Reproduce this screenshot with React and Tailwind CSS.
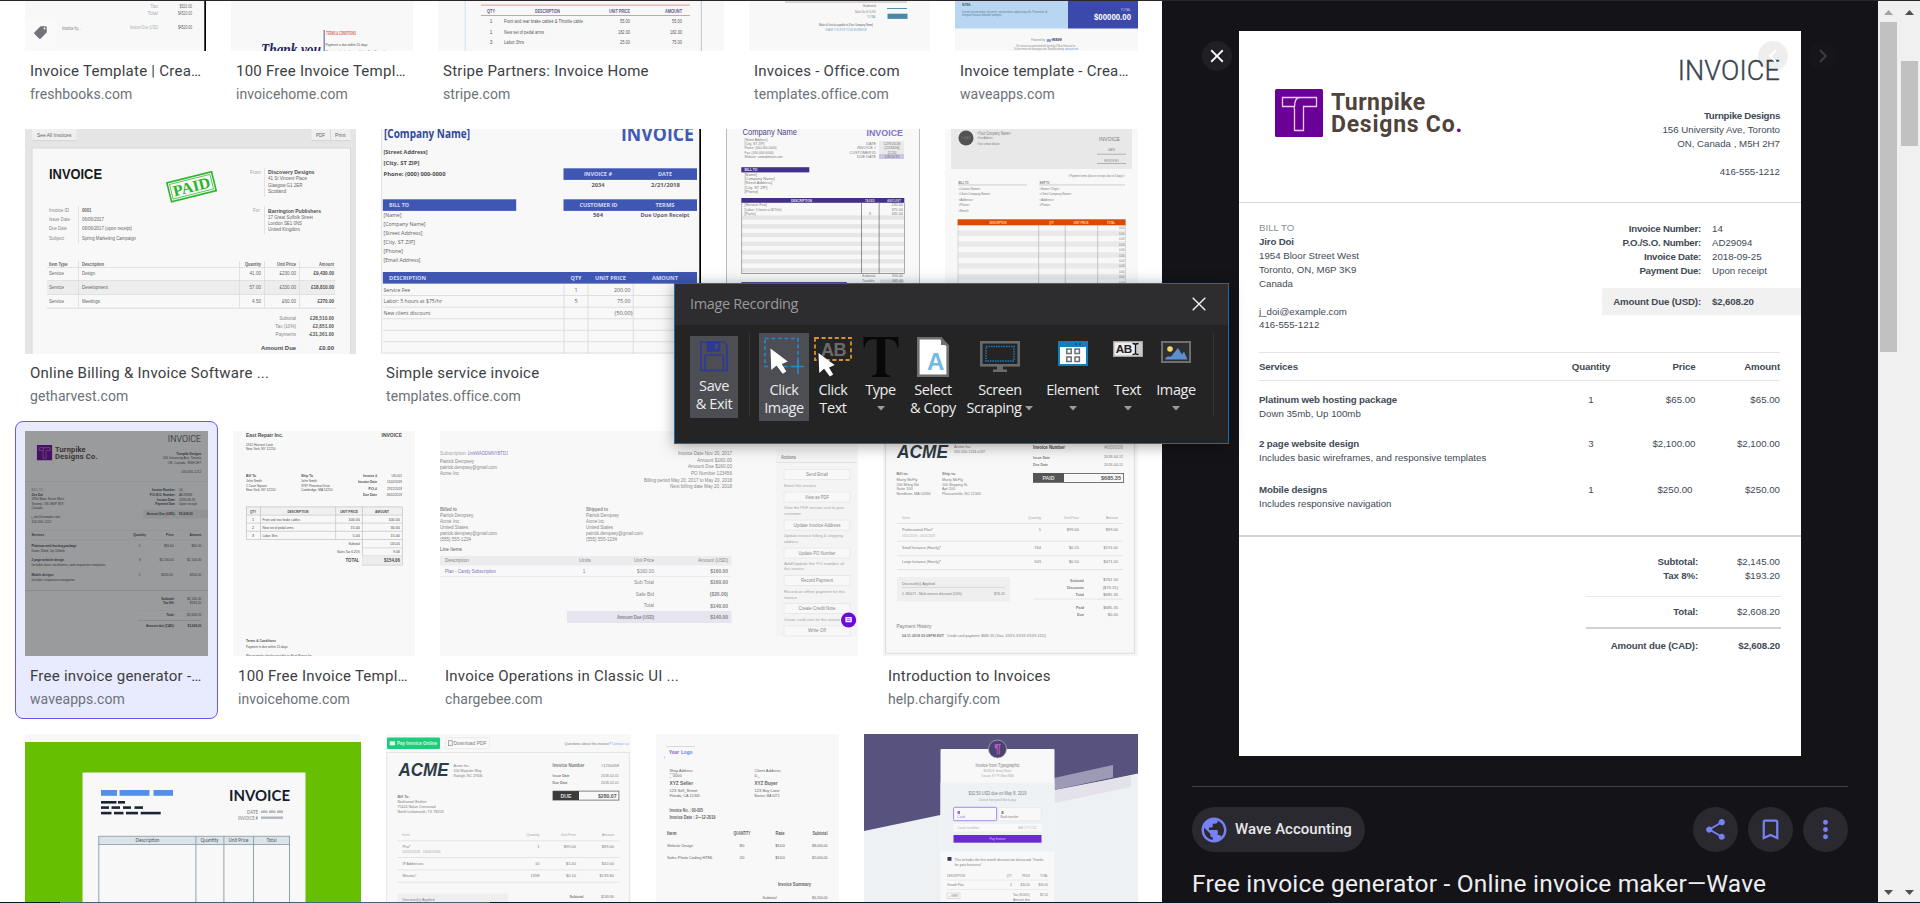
import React from "react";
import { MdPublic, MdShare, MdBookmarkBorder, MdMoreVert, MdClose, MdChevronLeft, MdChevronRight, MdLocalOffer } from "react-icons/md";

/* ---------- thumbnail drawing helpers ---------- */

// Each label: [x, centerY, size, text, { w, b, a, c, f, i }]
function Labels({ items, color = "#6b6b6b", font = "Liberation Sans, sans-serif" }) {
  return items.map(([x, y, size, text, o = {}], i) => (
    <text
      key={i}
      x={x}
      y={y + size * 0.35}
      fontSize={size}
      fontFamily={o.f || font}
      fontWeight={o.b ? 700 : 400}
      fontStyle={o.i ? "italic" : "normal"}
      fill={o.c || color}
      opacity={size < 7 ? 0.88 : 1}
      textAnchor={o.a || "start"}
      textLength={o.w}
      lengthAdjust={o.w ? "spacingAndGlyphs" : undefined}
    >
      {text}
    </text>
  ));
}

// Each box: [x, y, width, height, fill]
function Boxes({ items, fill = "#dcdcdc" }) {
  return items.map(([x, y, w, h, f], i) => <rect key={i} x={x} y={y} width={w} height={h} fill={f || fill} />);
}

function Picture({ x, y, w, h, bg = "#f8f8f8", children }) {
  return (
    <svg className="block" width={w} height={h} viewBox={`${x} ${y} ${w} ${h}`}>
      <rect x={x} y={y} width={w} height={h} fill={bg} />
      {children}
    </svg>
  );
}

const E = { a: "end" };
const M = { a: "middle" };
const stack = (x, size, ys, texts, o) => texts.map((t, i) => [x, ys[i], size, t, o]);

/* ---------- row 1 ---------- */

const Freshbooks = () => (
  <Picture x={25} y={1} w={181} h={50}>
    <rect x="204.3" y="1" width="1.7" height="50" fill="#000" />
    <Labels
      items={[
        [158, 6, 5, "Tax", { ...E, c: "#9aa6b2" }],
        [192, 6, 5, "$520.00", { ...E, w: 12.5, c: "#555" }],
        [158, 13.5, 5, "Total", { ...E, c: "#9aa6b2" }],
        [192, 13.5, 5, "$4520.00", { ...E, w: 14, c: "#555" }],
        [62, 28, 4.6, "Invoice by...", { w: 19 }],
        [158, 27.5, 4.6, "Amount Due (USD)", { ...E, w: 28, c: "#9aa6b2" }],
        [192, 27.5, 5, "$4520.00", { ...E, w: 14, c: "#444" }],
      ]}
    />
    <rect x="25" y="19" width="31" height="32" rx="4" fill="#fafafb" />
    <g transform="translate(33 25)">
      <MdLocalOffer size={15} color="#707377" style={{ transform: "scaleX(-1)", transformOrigin: "7.5px 7.5px" }} />
    </g>
  </Picture>
);

const InvoiceHomeTop = () => (
  <Picture x={231} y={1} w={182} h={50}>
    <rect x="323.7" y="30" width="0.9" height="21" fill="#44447a" />
    <Labels
      items={[
        [261, 49, 17, "Thank you", { w: 60, i: true, b: true, c: "#23235f", f: "Liberation Serif, serif" }],
        [326, 33, 4.6, "TERMS & CONDITIONS", { w: 30, b: true, c: "#d9544f" }],
        [325.5, 44, 4.3, "Payment is due within 15 days", { w: 42, c: "#333" }],
        [325.5, 51.4, 3.6, "Please make checks payable to: East Repair Inc.", { w: 63, c: "#555" }],
      ]}
    />
  </Picture>
);

const StripePartners = () => (
  <Picture x={438} y={1} w={286} h={50}>
    <Boxes items={[[464.6, 1, 1, 50, "#cfe0f0"], [700.8, 1, 1.2, 50, "#c9cdda"], [481, 4.6, 209, 1, "#e59a9a"], [481, 15, 209, 1, "#e59a9a"]]} />
    <Labels
      color="#444"
      items={[
        [487, 10.5, 6, "QTY", { w: 8, b: true, c: "#45457c" }],
        [535, 10.5, 6, "DESCRIPTION", { w: 25, b: true, c: "#45457c" }],
        [609, 10.5, 6, "UNIT PRICE", { w: 21, b: true, c: "#45457c" }],
        [665, 10.5, 6, "AMOUNT", { w: 17, b: true, c: "#45457c" }],
        [491, 21.5, 4.8, "1", M], [504, 21.5, 4.8, "Front and rear brake cables & Throttle cable", { w: 79 }],
        [630, 21.5, 4.8, "55.00", { ...E, w: 10 }], [682, 21.5, 4.8, "55.00", { ...E, w: 10 }],
        [491, 32, 4.8, "1", M], [504, 32, 4.8, "New set of pedal arms", { w: 40 }],
        [630, 32, 4.8, "182.00", { ...E, w: 12 }], [682, 32, 4.8, "182.00", { ...E, w: 12 }],
        [491, 42.5, 4.8, "3", M], [504, 42.5, 4.8, "Labor 3hrs", { w: 20 }],
        [630, 42.5, 4.8, "25.00", { ...E, w: 10 }], [682, 42.5, 4.8, "75.00", { ...E, w: 10 }],
      ]}
    />
  </Picture>
);

const OfficeTop = () => (
  <Picture x={749} y={1} w={181} h={50}>
    <Boxes items={[[785, 1, 122, 2, "#d5d5d5"], [887, 8, 20, 1, "#4f93b0"], [887.5, 13.7, 20, 5.2, "#4a88a8"]]} />
    <Labels
      items={[
        [876, 5.8, 3.6, "Subtotal", E],
        [876, 11.5, 3.6, "Sales Tax @ 6.25%", { ...E, w: 21 }],
        [876, 16.5, 3.8, "TOTAL", { ...E, w: 9, c: "#4a88a8" }],
        [846, 24.5, 3.7, "Make all checks payable to [Your Company Name]", { ...M, w: 54, c: "#444" }],
        [846, 30, 3.7, "THANK YOU FOR YOUR BUSINESS!", { ...M, w: 42, c: "#5f9ab5" }],
      ]}
    />
  </Picture>
);

const WaveTop = () => (
  <Picture x={955} y={1} w={183} h={50}>
    <Boxes items={[[955, 1, 113, 27.5, "#b8d5f1"], [1068, 1, 70, 27.5, "#3b49ab"]]} />
    <Labels
      color="#56718c"
      items={[
        [962, 5, 3.4, "NOTES:", { b: true, w: 9, c: "#334" }],
        [962, 11.5, 3.5, "Lorem ipsum dolor sit amet, consectetur adipiscing elit. Praesent id", { w: 85 }],
        [962, 15.2, 3.5, "tempus massa blandit semper.", { w: 40 }],
        [1131, 10, 3.4, "TOTAL", { ...E, c: "#cdd3ff" }],
        [1131, 17, 8.5, "$00000.00", { ...E, b: true, w: 37, c: "#fff" }],
        [1031, 39.7, 4, "Powered by", { w: 14, c: "#777" }],
        [1046.5, 39.5, 6, "w", { b: true, c: "#2f5bea" }],
        [1052, 39.5, 5.5, "wave", { b: true, w: 10, c: "#222d40" }],
        [1046, 46.1, 2.7, "This invoice was generated with the help of Wave Financial Inc.", { ...M, w: 60, c: "#777" }],
        [1014, 49.2, 2.7, "To learn more visit waveapps.com. Wave Accounting", { w: 50, c: "#777" }],
        [1065, 49.2, 2.7, "www.wave.com", { w: 13, c: "#5a7be8" }],
      ]}
    />
  </Picture>
);

/* ---------- row 2 ---------- */

const Harvest = () => (
  <Picture x={25} y={129} w={331} h={225} bg="#e5e5e5">
    <Boxes
      items={[
        [32, 129, 44.5, 11.5, "#efefef"], [32, 140.3, 44.5, 0.8, "#cfcfcf"],
        [311.5, 129, 39, 11.5, "#efefef"], [311.5, 140.3, 39, 0.8, "#cfcfcf"], [330, 129, 0.8, 11, "#d2d2d2"],
        [31.5, 147.5, 319.5, 207, "#d9d9d9"], [32.5, 148.5, 317.5, 206, "#f8f8f8"],
        [47, 280.5, 288.5, 13.5, "#ededed"],
        [47, 267, 288.5, 0.8], [47, 280, 288.5, 0.8], [47, 294, 288.5, 0.8], [47, 307.7, 288.5, 1],
        [78, 206, 0.8, 37], [264, 168, 0.8, 29], [264, 206, 0.8, 28],
        [78, 261, 0.8, 47], [239, 261, 0.8, 47], [264, 261, 0.8, 47], [299, 261, 0.8, 47],
      ]}
    />
    <g transform="rotate(-14 191.5 186.5)" fill="none" stroke="#2bb52b">
      <rect x="168.5" y="177" width="46" height="19.5" strokeWidth="1.6" />
      <rect x="170.7" y="179.2" width="41.6" height="15" strokeWidth="0.7" />
      <text x="191.5" y="192" textAnchor="middle" fontSize="15.5" fontWeight="700" fontFamily="Liberation Serif, serif" fill="#2bb52b" stroke="none" textLength="38" lengthAdjust="spacingAndGlyphs">PAID</text>
    </g>
    <Labels
      color="#505050"
      items={[
        [37, 135, 4.8, "See All Invoices", { w: 34.5 }], [316, 135, 4.8, "PDF", { w: 9 }], [335, 135, 4.8, "Print", { w: 10.5 }],
        [49, 173.7, 15, "INVOICE", { w: 53, b: true, c: "#1a1a1a" }],
        [250, 172.3, 4.6, "From", { c: "#999", w: 11 }], [253, 210, 4.6, "For", { c: "#999" }],
        [268, 172.3, 5.2, "Discovery Designs", { w: 46.5, b: true, c: "#333" }],
        [268, 178.6, 4.7, "41 St Vincent Place", { w: 39 }], [268, 185, 4.7, "Glasgow G1 2ER", { w: 34.5 }], [268, 191.4, 4.7, "Scotland", { w: 18 }],
        [268, 210.8, 5.2, "Barrington Publishers", { w: 53, b: true, c: "#333" }],
        [268, 217, 4.7, "17 Great Suffolk Street", { w: 45 }], [268, 223.3, 4.7, "London SE1 0NS", { w: 34 }], [268, 229.6, 4.7, "United Kingdom", { w: 32 }],
        [49, 210.3, 4.6, "Invoice ID", { w: 20, c: "#777" }], [49, 219.5, 4.6, "Issue Date", { w: 21, c: "#777" }], [49, 228.7, 4.6, "Due Date", { w: 18, c: "#777" }], [49, 238, 4.6, "Subject", { w: 15, c: "#777" }],
        [82, 210.3, 4.8, "0001", { w: 9.5, b: true }], [82, 219.5, 4.8, "06/06/2017", { w: 22 }], [82, 228.7, 4.8, "06/06/2017 (upon receipt)", { w: 50 }], [82, 238, 4.8, "Spring Marketing Campaign", { w: 54 }],
        [49, 264, 4.5, "Item Type", { b: true, w: 18.5 }], [82, 264, 4.5, "Description", { b: true, w: 22 }],
        [261, 264, 4.5, "Quantity", { ...E, b: true, w: 16 }], [296, 264, 4.5, "Unit Price", { ...E, b: true, w: 19 }], [334, 264, 4.5, "Amount", { ...E, b: true, w: 15 }],
        ...stack(49, 4.6, [273.8, 287.5, 301.3], ["Service", "Service", "Service"], { w: 15 }),
        [82, 273.8, 4.6, "Design", { w: 13 }], [82, 287.5, 4.6, "Development", { w: 26 }], [82, 301.3, 4.6, "Meetings", { w: 18 }],
        ...stack(261, 4.6, [273.8, 287.5, 301.3], ["41.00", "57.00", "4.50"], E),
        ...stack(296, 4.6, [273.8, 287.5, 301.3], ["£230.00", "£330.00", "£60.00"], E),
        ...stack(334, 4.6, [273.8, 287.5, 301.3], ["£9,430.00", "£18,810.00", "£270.00"], { ...E, b: true, c: "#333" }),
        ...stack(296, 4.6, [318.7, 326.3, 334], ["Subtotal", "Tax (10%)", "Payments"], { ...E, c: "#777" }),
        ...stack(334, 4.8, [318.7, 326.3, 334], ["£28,510.00", "£2,851.00", "-£31,361.00"], { ...E, b: true, c: "#444" }),
        [296, 347.5, 6.2, "Amount Due", { ...E, b: true, w: 35, c: "#333" }], [334, 347.5, 6.2, "£0.00", { ...E, b: true, w: 15, c: "#333" }],
      ]}
    />
  </Picture>
);

const B2 = "#3f57b2";
const WH = { b: true, c: "#e8ecff" };
const SimpleService = () => (
  <Picture x={381} y={129} w={320} h={225}>
    <Boxes
      items={[
        [699.3, 129, 1.7, 225, "#000"], [381, 129, 0.8, 225, "#ddd"],
        [563.5, 168.3, 133.5, 11.6, B2], [382.8, 199.3, 133.4, 11.6, B2], [563.5, 199.3, 133.5, 11.6, B2], [382.8, 272, 314.2, 11.6, B2],
        ...[295, 306.7, 318.3, 329.8, 341.3, 352.5].map((y) => [383, y, 314, 0.9]),
        [563.5, 284, 0.9, 70], [587.5, 284, 0.9, 70], [632.7, 284, 0.9, 70], [697, 284, 0.9, 70],
      ]}
    />
    <Labels
      font="Open Sans, sans-serif"
      color="#4a4a4a"
      items={[
        [384, 133.6, 11.8, "[Company Name]", { w: 86, b: true, c: "#31499c" }],
        [694, 134, 19, "INVOICE", { ...E, w: 73, b: true, c: "#4159b4" }],
        [383.5, 152.3, 5.9, "[Street Address]", { b: true, w: 44, c: "#333" }], [383.5, 163.4, 5.9, "[City, ST  ZIP]", { b: true, w: 36, c: "#333" }], [383.5, 174.3, 5.9, "Phone: (000) 000-0000", { b: true, w: 62, c: "#333" }],
        [598, 174.2, 5.8, "INVOICE #", { ...M, ...WH, w: 28 }], [665, 174.2, 5.8, "DATE", { ...M, ...WH, w: 14 }],
        [598, 185.3, 5.8, "2034", { ...M, b: true, w: 13 }], [665.5, 185.3, 5.8, "2/21/2018", { ...M, b: true, w: 29 }],
        [389, 205.2, 5.8, "BILL TO", { ...WH, w: 20 }], [598.5, 205.2, 5.8, "CUSTOMER ID", { ...M, ...WH, w: 38 }], [665, 205.2, 5.8, "TERMS", { ...M, ...WH, w: 19 }],
        [598, 215.3, 5.8, "564", { ...M, b: true, w: 10 }], [665, 215.3, 5.8, "Due Upon Receipt", { ...M, b: true, w: 49 }],
        [383.5, 215.5, 5.6, "[Name]", { w: 18 }], [383.5, 224.5, 5.6, "[Company Name]", { w: 42 }], [383.5, 233.3, 5.6, "[Street Address]", { w: 39 }], [383.5, 242.2, 5.6, "[City, ST  ZIP]", { w: 31.5 }], [383.5, 251, 5.6, "[Phone]", { w: 19.5 }], [383.5, 260, 5.6, "[Email Address]", { w: 37 }],
        [389, 278.3, 5.8, "DESCRIPTION", { ...WH, w: 37 }], [576, 278.3, 5.8, "QTY", { ...M, ...WH, w: 11 }], [610.5, 278.3, 5.8, "UNIT PRICE", { ...M, ...WH, w: 31 }], [665, 278.3, 5.8, "AMOUNT", { ...M, ...WH, w: 26 }],
        [383.5, 290, 5.4, "Service Fee", { w: 26.5 }], [383.5, 301.2, 5.4, "Labor: 5 hours at $75/hr", { w: 58.5 }], [383.5, 312.8, 5.4, "New client discount", { w: 47 }],
        [576, 290, 5.4, "1", M], [576, 301.2, 5.4, "5", M],
        [630.5, 290, 5.4, "200.00", { ...E, w: 16.5 }], [630.5, 301.2, 5.4, "75.00", { ...E, w: 13.5 }], [632.5, 312.8, 5.4, "(50.00)", { ...E, w: 18 }],
      ]}
    />
  </Picture>
);

const PurpleInvoice = () => (
  <Picture x={726} y={129} w={194} h={225}>
    <Boxes
      items={[
        [726, 129, 1, 225, "#bbb"], [919, 129, 1, 225, "#bbb"],
        [879, 141, 25, 13, "#eaeaea"], [879, 154, 25, 5, "#cac6e4"],
        [741.3, 167.2, 68, 5.2, "#43308a"], [741.3, 198, 163, 4.8, "#43308a"],
        ...Array.from({ length: 7 }, (_, i) => [741.3, 207 + 4.35 + i * 8.75 + 4, 163, 4.4, "#e6e6e6"]),
        [741.3, 203, 0.8, 70.5, "#999"], [861.2, 203, 0.8, 70.5, "#777"], [878.7, 203, 0.8, 70.5, "#777"], [904, 203, 0.8, 70.5, "#999"], [741.3, 273.2, 163, 0.8, "#888"],
        [741.3, 282, 105.5, 4, "#5b4c9b"], [880, 279.5, 24, 5, "#e2e2e2"],
      ]}
    />
    <Labels
      items={[
        [742.5, 132.3, 8.6, "Company Name", { w: 54.5, c: "#4d3e8e" }],
        [903, 132.3, 9.4, "INVOICE", { ...E, w: 36.5, b: true, c: "#8174cf" }],
        [744.5, 139.5, 3.9, "[Street Address]", { w: 23 }], [744.5, 143.7, 3.9, "[City, ST ZIP]", { w: 20 }], [744.5, 148, 3.9, "Phone: (000-000-0000)", { w: 32 }], [744.5, 152.3, 3.9, "Fax: (000-000-0000)", { w: 29 }], [744.5, 156.6, 3.9, "Website: somedomain.com", { w: 38 }],
        ...stack(876, 3.8, [143.7, 148, 152.3, 156.6], ["DATE", "INVOICE #", "CUSTOMER ID", "DUE DATE"], E),
        ...stack(892, 3.8, [143.7, 148, 152.3, 156.6], ["12/9/2018", "[123456]", "[123]", "1/8/2019"], M),
        [744.5, 170, 4.2, "BILL TO", { b: true, c: "#fff", w: 13 }],
        ...stack(744.5, 3.9, [174.5, 178.8, 183, 187.3, 191.6], ["[Name]", "[Company Name]", "[Street Address]", "[City, ST ZIP]", "[Phone]"]),
        [801.5, 200.5, 4, "DESCRIPTION", { ...M, b: true, c: "#fff", w: 21 }], [870, 200.5, 3.6, "TAXED", { ...M, b: true, w: 10, c: "#ddd" }], [894, 200.5, 3.8, "AMOUNT", { ...M, b: true, w: 14, c: "#ddd" }],
        [744.5, 205, 3.8, "[Service Fee]"], [744.5, 209.2, 3.8, "[Labor: 5 hours at $75/hr]", { w: 37 }], [744.5, 213.5, 3.8, "[Parts]"],
        ...stack(903, 3.8, [205, 209.2, 213.5], ["230.00", "375.00", "345.00"], E), [870, 213.5, 3.8, "X", M],
        ...stack(862, 3.6, [275.7, 280.3], ["Subtotal", "Taxable"]), ...stack(903, 3.6, [275.7, 280.3], ["950.00", "345.00"], E),
      ]}
    />
  </Picture>
);

const OrangeInvoice = () => (
  <Picture x={945} y={129} w={193} h={225}>
    <Boxes
      items={[
        [951, 129, 181, 40, "#e8e8e8"], [1097, 153.8, 29, 0.7, "#999"], [1097, 163.2, 29, 0.7, "#999"],
        [958, 184.6, 69, 0.7, "#bbb"], [1039, 184.6, 86, 0.7, "#bbb"],
        ...Array.from({ length: 7 }, (_, i) => [958, 230.5 + i * 10.9, 167.5, 5.4, "#e9e9e9"]),
        [957.6, 225, 0.7, 90, "#ccc"], [1038.3, 225, 0.8, 90, "#bbb"], [1064.8, 225, 0.8, 90, "#bbb"], [1097.3, 225, 0.8, 90, "#bbb"], [1125, 225, 0.7, 90, "#ccc"],
        [957.6, 219.3, 168, 6, "#d84b02"],
      ]}
    />
    <circle cx="966" cy="138" r="7.5" fill="#525252" />
    <Labels
      items={[
        [966, 138, 4, "LOGO", { ...M, w: 9, c: "#999" }],
        [977, 133.5, 4.5, "<Your Company Name>", { w: 34 }], [977, 137.9, 3.8, "<Your Address>", { w: 16 }], [977, 143.5, 4, "<Your contact details>", { w: 23 }],
        [1120, 139.3, 6, "INVOICE", { ...E, w: 21 }], [1111.5, 150, 3.8, "DATE", { ...M, w: 7 }], [1111.5, 160.7, 3.8, "INVOICE NO.", { ...M, w: 15 }],
        [1124.5, 176, 3.7, "<Payment terms (due on receipt, due in X days)>", { ...E, w: 56 }],
        [958.5, 182.5, 3.8, "BILL TO", { w: 10, b: true }], [1039.5, 182.5, 3.8, "SHIP TO", { w: 10, b: true }],
        [958.5, 188.5, 4, "<Contact Name>", { w: 22 }], [958.5, 194, 4, "<Client Company Name>", { w: 32 }], [958.5, 199.5, 4, "<Address>", { w: 14.5 }], [958.5, 205, 4, "<Phone>", { w: 11 }], [958.5, 210.5, 4, "<Email>", { w: 10.5 }],
        [1039.5, 188.5, 4, "<Name / Dept>", { w: 20 }], [1039.5, 194, 4, "<Client Company Name>", { w: 32 }], [1039.5, 199.5, 4, "<Address>", { w: 14.5 }], [1039.5, 205, 4, "<Phone>", { w: 11 }],
        [998, 222.4, 3.7, "DESCRIPTION", { ...M, b: true, w: 17, c: "#ffe0cc" }], [1051.5, 222.4, 3.7, "QTY", { ...M, b: true, w: 5, c: "#ffe0cc" }], [1081, 222.4, 3.7, "UNIT PRICE", { ...M, b: true, w: 15, c: "#ffe0cc" }], [1111, 222.4, 3.7, "TOTAL", { ...M, b: true, w: 8, c: "#ffe0cc" }],
        ...Array.from({ length: 11 }, (_, i) => [1124.5, 228 + i * 5.45, 3.6, "0.00", { ...E, w: 5.5 }]),
      ]}
    />
  </Picture>
);

/* ---------- row 3 ---------- */

const EastRepair = () => (
  <Picture x={233} y={431} w={182} h={225}>
    <Boxes
      fill="#c9c9c9"
      items={[
        [246, 506.8, 156, 8, "#f0f0f0"],
        ...[506.5, 514.7, 522.7, 530.8, 539].map((y) => [246, y, 156, 0.8]),
        [246, 506.5, 0.8, 33], [260, 506.5, 0.8, 33], [335.3, 506.5, 0.8, 33],
        [362.2, 506.5, 0.8, 58.5], [402, 506.5, 0.8, 58.5], [362.2, 547.5, 40, 0.7], [362.2, 555.5, 40, 0.7], [362.2, 555.7, 40, 9, "#ededed"], [362.2, 564.7, 40, 0.8],
      ]}
    />
    <Labels
      color="#333"
      items={[
        [246, 434.6, 6.2, "East Repair Inc.", { b: true, w: 37 }], [402, 434.6, 6, "INVOICE", { ...E, b: true, w: 20.5 }],
        [246, 444.3, 4, "1912 Harvest Lane", { w: 27 }], [246, 448.8, 4, "New York, NY 12210", { w: 29.5 }],
        [246, 475.6, 4, "Bill To", { b: true, w: 10 }], [246, 480.8, 3.9, "John Smith", { w: 16 }], [246, 485.3, 3.9, "2 Court Square", { w: 21 }], [246, 489.8, 3.9, "New York, NY 12210", { w: 29.5 }],
        [301, 475.6, 4, "Ship To", { b: true, w: 12 }], [301, 480.8, 3.9, "John Smith", { w: 16 }], [301, 485.3, 3.9, "3787 Pineview Drive", { w: 29 }], [301, 489.8, 3.9, "Cambridge, MA 12210", { w: 31.5 }],
        [377, 475.6, 3.9, "Invoice #", { ...E, b: true, w: 14 }], [377, 482, 3.9, "Invoice Date", { ...E, b: true, w: 19 }], [377, 488.3, 3.9, "P.O.#", { ...E, b: true, w: 8.5 }], [377, 494.6, 3.9, "Due Date", { ...E, b: true, w: 14 }],
        [402, 475.6, 3.9, "US-001", { ...E, w: 10.5 }], [402, 482, 3.9, "11/02/2019", { ...E, w: 15 }], [402, 488.3, 3.9, "2312/2019", { ...E, w: 15 }], [402, 494.6, 3.9, "26/02/2019", { ...E, w: 15.5 }],
        [253, 511.2, 3.8, "QTY", { ...M, b: true, w: 6 }], [298, 511.2, 3.8, "DESCRIPTION", { ...M, b: true, w: 21 }], [349, 511.2, 3.8, "UNIT PRICE", { ...M, b: true, w: 18 }], [382, 511.2, 3.8, "AMOUNT", { ...M, b: true, w: 14 }],
        ...stack(253, 3.8, [519.2, 527.2, 535.3], ["1", "2", "3"], M),
        [262.5, 519.2, 3.8, "Front and rear brake cables", { w: 37.5 }], [262.5, 527.2, 3.8, "New set of pedal arms", { w: 31 }], [262.5, 535.3, 3.8, "Labor 3hrs", { w: 15 }],
        ...stack(360, 3.8, [519.2, 527.2, 535.3], ["100.00", "15.00", "5.00"], E), ...stack(400, 3.8, [519.2, 527.2, 535.3], ["100.00", "30.00", "15.00"], E),
        [360, 543.6, 3.8, "Subtotal", { ...E, w: 11.5 }], [400, 543.6, 3.8, "145.00", { ...E, w: 10 }], [360, 551.7, 3.8, "Sales Tax 6.25%", { ...E, w: 23 }], [400, 551.7, 3.8, "9.06", { ...E, w: 7 }],
        [359.5, 560.2, 5, "TOTAL", { ...E, b: true, w: 14 }], [400, 560.2, 5, "$154.06", { ...E, b: true, w: 16 }],
        [246, 641, 3.9, "Terms & Conditions", { b: true, w: 30 }], [246, 646.3, 3.8, "Payment is due within 15 days", { w: 41.5 }], [246, 655.2, 3.8, "Please make checks payable to: East Repair Inc.", { w: 67 }],
      ]}
    />
  </Picture>
);

const Chargebee = () => (
  <Picture x={440} y={431} w={418} h={225}>
    <Boxes
      items={[
        [440, 556, 291.5, 9.5, "#ececee"], [440, 576, 291.5, 0.7, "#e6e6e6"], [567, 611, 164.5, 12, "#e6e4ef"],
        [776, 449, 81, 187.5, "#f4f4f5"], [776, 462, 81, 0.7, "#ddd"],
      ]}
    />
    {[474.5, 497, 525, 553, 580.5, 608.5, 631].map((y) => (
      <rect key={y} x="784" y={y - 5} width="66" height="10" fill="#f8f8f8" stroke="#e4e4e4" strokeWidth="0.7" />
    ))}
    <Labels
      color="#777"
      items={[
        [440, 453.5, 4.6, "Subscription", { w: 26, c: "#999" }], [467.5, 453.5, 4.6, "1mkWADDWNYBTDJ", { w: 40.5, c: "#756ab5" }],
        [440, 461.5, 4.8, "Patrick Dempsey", { w: 34 }], [440, 467.5, 4.8, "patrick.dempsey@gmail.com", { w: 57 }], [440, 473.5, 4.8, "Acme Inc", { w: 19 }],
        [732, 453, 4.8, "Invoice Date  Nov 20, 2017", { ...E, w: 54 }], [732, 460, 4.8, "Amount  $160.00", { ...E, w: 35 }], [732, 466.5, 4.8, "Amount Due  $160.00", { ...E, w: 44 }], [732, 473.3, 4.8, "PO Number  123456", { ...E, w: 41 }], [732, 480, 4.8, "Billing period  May 20, 2017 to May 20, 2018", { ...E, w: 88 }], [732, 486.5, 4.8, "Next billing date  May 20, 2018", { ...E, w: 62 }],
        [440, 509, 4.8, "Billed to", { b: true, w: 17 }], [440, 515, 4.7, "Patrick Dempsey,", { w: 34 }], [440, 521, 4.7, "Acme Inc", { w: 19 }], [440, 527, 4.7, "United States", { w: 28 }], [440, 533, 4.7, "patrick.dempsey@gmail.com", { w: 57 }], [440, 539, 4.7, "(555) 555-1234", { w: 31 }],
        [586, 509, 4.8, "Shipped to", { b: true, w: 22 }], [586, 515, 4.7, "Patrick Dempsey", { w: 33 }], [586, 521, 4.7, "Acme Inc", { w: 18 }], [586, 527, 4.7, "United States", { w: 27 }], [586, 533, 4.7, "patrick.dempsey@gmail.com", { w: 57 }], [586, 539, 4.7, "(555) 555-1234", { w: 31 }],
        [440, 549.5, 4.8, "Line Items", { w: 22, c: "#444" }],
        [445, 560.8, 4.7, "Description", { w: 24 }], [579, 560.8, 4.7, "Units", { w: 12 }], [654, 560.8, 4.7, "Unit Price", { ...E, w: 20 }], [728, 560.8, 4.7, "Amount (USD)", { ...E, w: 30 }],
        [445, 571, 4.8, "Plan - Candy Subscription", { w: 51, c: "#6a5fb0" }], [584, 571, 4.6, "1", M], [654, 571, 4.7, "$160.00", E], [728, 571, 4.9, "$160.00", { ...E, b: true }],
        ...stack(654, 4.8, [582.7, 594.2, 605.8], ["Sub Total", "Safe Bid", "Total"], E), ...stack(728, 4.9, [582.7, 594.2, 605.8], ["$160.00", "($20.00)", "$140.00"], { ...E, b: true }),
        [654, 617.2, 4.9, "Amount Due (USD)", { ...E, w: 37, b: true }], [728, 617.2, 4.9, "$140.00", { ...E, b: true }],
        [781, 456.8, 4.9, "Actions", { b: true, w: 15 }],
        ...[[474.5, "Send Email", 22], [497, "View as PDF", 24], [525, "Update Invoice Address", 47], [553, "Update PO Number", 37], [580.5, "Record Payment", 32], [608.5, "Create Credit Note", 37], [630.7, "Write Off", 18]].map(([y, t, w]) => [817, y, 4.9, t, { ...M, w }]),
        ...[[485, "Email this invoice", 32], [507.5, "View the PDF version sent to your", 60], [513, "customer", 17], [535.5, "Update invoice billing & shipping", 59], [541, "address", 14], [563.3, "Add/Update the PO number of", 60], [568.7, "this invoice", 20], [591, "Record an offline payment for this", 61], [597, "invoice", 13], [619, "Create credit note for this invoice", 56]].map(([y, t, w]) => [784, y, 4.4, t, { w, c: "#999" }]),
      ]}
    />
    <circle cx="848.6" cy="620" r="7.6" fill="#6a0bd6" />
    <rect x="845.4" y="617" width="6.4" height="5.2" rx="0.6" fill="#fff" />
    <path d="M846.6 618.7h4M846.6 620.4h4" stroke="#6a0bd6" strokeWidth="0.7" />
  </Picture>
);

const Chargify = () => (
  <Picture x={883} y={431} w={255} h={225} bg="#f6f6f6">
    <rect x="885.5" y="425" width="249" height="228.3" fill="#f8f8f8" stroke="#dfdfdf" strokeWidth="1.2" />
    <Boxes
      items={[
        [1033, 473, 91, 9.8, "#555"], [1064, 473.8, 59.2, 8.2, "#f8f8f8"],
        [897, 523.3, 226, 0.7], [897, 540.8, 226, 0.7], [897, 555.4, 226, 0.7], [897, 569, 226, 0.8],
        [897, 577, 113, 24.3, "#efefef"], [902, 587.2, 103, 0.6, "#ccc"], [1034, 598.7, 89, 0.7],
      ]}
    />
    <Labels
      items={[
        [897, 451.6, 18, "ACME", { w: 51, b: true, i: true, c: "#2b3b47" }],
        [954, 447, 4, "Acme Inc"], [954, 452, 4, "555-555-1234 x137", { w: 31 }],
        [1033, 447, 4.8, "Invoice Number", { b: true, w: 32, c: "#333" }], [1123, 447, 4.8, "#000009", { ...E, c: "#999" }],
        [1033, 457, 4.3, "Issue Date", { b: true, w: 17 }], [1123, 457, 4.2, "2018-04-11", { ...E, w: 19 }], [1033, 464.5, 4.3, "Due Date", { b: true, w: 15 }], [1123, 464.5, 4.2, "2018-04-11", { ...E, w: 19 }],
        [1048.5, 478, 5.6, "PAID", { ...M, b: true, w: 12, c: "#eee" }], [1121, 478, 5.8, "$685.35", { ...E, b: true, w: 20, c: "#444" }],
        [896.5, 473.5, 4.3, "Bill to:", { w: 12, b: true }], [896.5, 479, 4.3, "Marty McFly", { w: 21 }], [896.5, 484, 4.3, "200 Billing Rd.", { w: 23 }], [896.5, 488.7, 4.3, "Suite 100", { w: 16 }], [896.5, 493.5, 4.3, "Needham, MA 02494", { w: 34 }],
        [942, 473.5, 4.3, "Ship to:", { w: 14, b: true }], [942, 479, 4.3, "Marty McFly", { w: 21 }], [942, 484, 4.3, "100 Shipping St.", { w: 26 }], [942, 488.7, 4.3, "Apt 200", { w: 13 }], [942, 493.5, 4.3, "Pleasantville, NC 12345", { w: 39 }],
        [902, 517.7, 4, "Item", { c: "#aaa" }], ...[[1041, "Quantity", 13], [1079, "Unit Price", 15], [1118, "Amount", 12]].map(([x, t, w]) => [x, 517.7, 4, t, { ...E, w, c: "#999" }]),
        [902, 529.8, 4.2, "Professional Plan*", { w: 31 }], [902, 535.6, 3.4, "03/11/2018 - 04/11/2018", { w: 33, c: "#aaa" }], [902, 547.7, 4.2, "Small Instance (Hourly)*", { w: 39 }], [902, 561.5, 4.2, "Large Instance (Hourly)*", { w: 39 }],
        ...stack(1041, 4, [529.8, 547.7, 561.5], ["1", "764", "943"], E), ...stack(1079, 4, [529.8, 547.7, 561.5], ["$99.00", "$0.25", "$0.50"], E), ...stack(1118, 4, [529.8, 547.7, 561.5], ["$99.00", "$191.00", "$471.50"], E),
        [902, 583.6, 4.3, "Discount(s) Applied", { w: 33 }], [902, 593.5, 4, "1. MULTI - Multi-service discount (10%)", { w: 60 }], [1005, 593.5, 4, "$76.15", { ...E, w: 11 }],
        [1084, 580, 4.3, "Subtotal", { ...E, b: true, w: 14 }], [1084, 587.4, 4.3, "Discounts", { ...E, b: true, w: 17 }], [1084, 594.6, 4.3, "Total", { ...E, b: true, w: 8.5 }], [1084, 607.4, 4.3, "Paid", { ...E, b: true, w: 8 }], [1084, 614.7, 4.3, "Due", { ...E, b: true, w: 7 }],
        ...stack(1118, 4.1, [580, 587.4, 594.6, 607.4, 614.7], ["$761.50", "($76.15)", "$685.35", "$685.35", "$0.00"], E),
        [896.5, 626, 5.3, "Payment History", { w: 35 }], [902, 635.8, 4, "04.11.2018 03:08PM EDT", { b: true, w: 42 }], [947, 635.8, 4, "Credit card payment: $685.35 (Visa, XXXX-XXXX-XXXX-1111)", { w: 99 }],
      ]}
    />
  </Picture>
);

/* ---------- row 4 ---------- */

const GreenInvoice = () => (
  <Picture x={25} y={734} w={336} h={168}>
    <Boxes
      items={[
        [25, 742, 336, 160, "#66bf00"], [82.5, 772.5, 223, 130, "#f8f8f8"],
        [101, 790, 16, 5.8, "#528fe6"], [119.5, 790, 30, 5.8, "#528fe6"], [153.5, 790, 19.5, 5.8, "#528fe6"],
        ...[[101, 801, 15.5], [118, 801, 7], [101, 806.3, 8], [111.5, 806.3, 8.5], [123, 806.3, 8], [134.5, 806.3, 8.5], [101, 811.8, 10.5], [114, 811.8, 9.5], [126, 811.8, 12], [140.7, 811.8, 20]].map(([x, y, w]) => [x, y, w, 2.6, "#1c2433"]),
        ...[[261, 810.5, 6.5], [269, 810.5, 6.5], [277, 810.5, 6], [261, 816.5, 22]].map(([x, y, w]) => [x, y, w, 2.4, "#b3b6bb"]),
        [98.3, 836, 191.5, 8.5, "#dbe4e8"],
        [98.3, 835.8, 191.5, 0.9, "#8fa3ae"], [98.3, 844, 191.5, 0.9, "#8fa3ae"],
        ...[98.3, 195.4, 223.4, 253, 289].map((x) => [x, 836, 1, 66, "#8fa3ae"]),
      ]}
    />
    <Labels
      font="Lato, sans-serif"
      items={[
        [290, 795.3, 15.5, "INVOICE", { ...E, w: 61, b: true, c: "#151c30" }],
        [258, 811.7, 5.2, "DATE", { ...E, w: 11 }], [258, 817.9, 5.2, "INVOICE #", { ...E, w: 20 }],
        [147.5, 840, 5, "Description", { ...M, w: 24, c: "#444" }], [209.5, 840, 5, "Quantity", { ...M, w: 18, c: "#444" }], [238.5, 840, 5, "Unit Price", { ...M, w: 20, c: "#444" }], [271.5, 840, 5, "Total", { ...M, w: 10, c: "#444" }],
      ]}
    />
  </Picture>
);

const PayOnline = () => (
  <Picture x={386} y={734} w={245} h={168}>
    <rect x="386.8" y="752.5" width="242.5" height="155" fill="none" stroke="#e2e2e2" strokeWidth="0.8" />
    <rect x="387" y="737.5" width="53" height="11.5" rx="1" fill="#1fcc7c" />
    <rect x="445.5" y="737.7" width="44" height="11" rx="1" fill="#f9f9f9" stroke="#e3e3e3" strokeWidth="0.6" />
    <rect x="389.7" y="741.3" width="5.3" height="4" fill="#d9f8e8" />
    <rect x="448.6" y="740.7" width="3.6" height="5" fill="none" stroke="#888" strokeWidth="0.7" />
    <Boxes
      items={[
        [552.5, 790.7, 66.8, 9.8, "#666"], [579, 791.5, 39.5, 8.2, "#f8f8f8"], [553, 791.2, 26, 8.8, "#3b3b3b"],
        ...[840.5, 857, 869.6, 881.8].map((y) => [397.5, y, 222, 0.7]), [397.5, 893.5, 110.5, 9, "#efefef"],
      ]}
    />
    <Labels
      items={[
        [397, 743.3, 5, "Pay Invoice Online", { w: 40, b: true, c: "#e8fff4" }], [453.5, 743.3, 5, "Download PDF", { w: 33 }],
        [564.5, 743.3, 4, "Questions about this invoice?", { w: 46.5 }], [612, 743.3, 4, "Contact us", { w: 17, c: "#6ba3ee" }],
        [398.5, 769.7, 18, "ACME", { w: 50, b: true, i: true, c: "#2b3b47" }],
        [453.5, 765.5, 4, "Acme Inc.", { w: 16 }], [453.5, 770.4, 4, "100 Majestic Way", { w: 28 }], [453.5, 775.4, 4, "Raleigh, NC 27606", { w: 29 }],
        [552.5, 765.5, 4.8, "Invoice Number", { b: true, w: 32 }], [619, 765.5, 4.4, "#1250459", { ...E, w: 18 }],
        [552.5, 775.4, 4.2, "Issue Date", { b: true, w: 17 }], [552.5, 782.5, 4.2, "Due Date", { b: true, w: 15 }], ...stack(619, 4, [775.4, 782.5], ["2018-02-01", "2018-02-01"], { ...E, w: 18 }),
        [566, 795.7, 5.8, "DUE", { ...M, b: true, w: 11, c: "#eee" }], [616.5, 795.7, 5.8, "$280.07", { ...E, b: true, w: 18.5, c: "#444" }],
        [397.5, 796, 4.3, "Bill To:", { w: 12, b: true }], [397.5, 801.3, 4.3, "Nathaniel Esther", { w: 29 }], [397.5, 806.4, 4.3, "75424 Nolan Crossroad", { w: 38 }], [397.5, 811.2, 4.3, "North Leilamouth, TX 78203", { w: 46 }],
        [402, 835, 4, "Item", { c: "#aaa" }], ...[[539.5, "Quantity", 13], [576, "Unit Price", 15], [614, "Amount", 12]].map(([x, t, w]) => [x, 835, 4, t, { ...E, w, c: "#999" }]),
        [402.5, 846.7, 4.2, "Pro*"], [402.5, 851.7, 4, "02/01/2018 - 03/01/2018", { w: 38, c: "#999" }], [402.5, 864, 4.2, "IP Addresses", { w: 21 }], [402.5, 876, 4.2, "Minutes*", { w: 14 }],
        ...stack(539.5, 4, [846.7, 864, 876], ["1", "10", "1398"], E), ...stack(576, 4, [846.7, 864, 876], ["$99.00", "$1.00", "$0.10"], E), ...stack(614, 4, [846.7, 864, 876], ["$99.00", "$10.00", "$139.80"], E),
        [402.5, 899.3, 4.3, "Discount(s) Applied", { w: 32 }], [583.5, 896.8, 4.4, "Subtotal", { ...E, b: true, w: 14 }], [614, 896.8, 4.2, "$248.80", { ...E, w: 13 }],
      ]}
    />
  </Picture>
);

const LogoInvoice = () => (
  <Picture x={656} y={734} w={183} h={168}>
    <Boxes items={[[666, 746.3, 29, 0.7, "#ccc"], [664, 756, 0.7, 3, "#ccc"], [669.5, 773.3, 8, 0.5, "#aaa"]]} />
    <Labels
      color="#4c4c4c"
      items={[
        [669, 752.3, 5.4, "Your", { b: true, w: 10, c: "#7b2fc4" }], [681, 752.3, 5.4, "Logo", { b: true, w: 11.5, c: "#4b6fe0" }],
        [669.5, 770.3, 4.3, "Shop Address", { w: 23 }], [669.5, 776, 4, "_ 0000"], [669.5, 783, 5, "XYZ Seller", { b: true, w: 23.5 }], [669.5, 790, 4.3, "123 Sell_Street", { w: 28 }], [669.5, 795, 4.3, "Florida, CA 12345", { w: 30.5 }],
        [754.5, 770.3, 4.3, "Client Address", { w: 26 }], [754.5, 776, 4, "0,_"], [754.5, 783, 5, "XYZ Buyer", { b: true, w: 23 }], [754.5, 790, 4.3, "123 Buy Lane", { w: 25 }], [754.5, 795, 4.3, "Boston, MA 0271", { w: 25 }],
        [669.5, 810.7, 4.6, "Invoice No. : 00-005", { w: 33.5, b: true }], [669.5, 817.5, 4.6, "Invoice Date : 2—12-2019", { w: 46, b: true }],
        [667, 833.5, 4.6, "Item", { b: true, w: 9.5 }], [742, 833.5, 4.6, "QUANTITY", { ...M, b: true, w: 17 }], [780, 833.5, 4.6, "Rate", { ...M, b: true, w: 9 }], [827.5, 833.5, 4.6, "Subtotal", { ...E, b: true, w: 15 }],
        [667, 845.7, 4.4, "Website Design", { w: 26 }], [667, 857.5, 4.4, "Sales Photo Coding HTML", { w: 46 }], ...stack(742, 4.3, [845.7, 857.5], ["80", "20"], M), ...stack(780, 4.3, [845.7, 857.5], ["$100", "$100"], M), ...stack(827.5, 4.3, [845.7, 857.5], ["$8,000.00", "$2,000.00"], { ...E, w: 15.5 }),
        [778, 884.7, 4.6, "Invoice Summary", { w: 33, b: true }], [762.5, 897, 4.4, "Subtotal", { w: 14 }], [827.5, 897, 4.4, "$5,200.00", { ...E, w: 15.5 }],
      ]}
    />
  </Picture>
);

const Typographic = () => (
  <Picture x={864} y={734} w={274} h={168} bg="#eef1f4">
    <polygon points="864,734 1138,734 1138,773.5 864,831" fill="#57537e" />
    <polygon points="1054,790 1131,775.5 1131,787 1054,803" fill="#e3e1e9" />
    <polygon points="1054,778 1113,765 1113,777.5 1054,790" fill="#9d9ab5" />
    <rect x="940.5" y="749" width="114" height="160" rx="1" fill="#f8f8f9" />
    <rect x="940.5" y="782.5" width="114" height="69" fill="#eff2f4" />
    <circle cx="997.5" cy="749" r="9" fill="#47446f" stroke="#a5a3bd" strokeWidth="0.8" />
    <rect x="953.6" y="807.3" width="43" height="13.4" rx="1" fill="#f8f8fb" stroke="#8a72dd" strokeWidth="0.8" />
    <rect x="998.2" y="807.5" width="43" height="13.2" rx="1" fill="#f8f8f9" stroke="#e4e6ea" strokeWidth="0.6" />
    <Boxes items={[[953.5, 824, 88, 7.3, "#f9f9fa"], [953.5, 835, 88, 7.7, "#6a2bd5"], [957.5, 811, 2.5, 3, "#8a72dd"], [1001.5, 811, 2, 3, "#888"], [947.5, 857, 4, 3.8, "#34385c"], [947, 879.8, 101, 0.5], [947, 889.5, 101, 0.5]]} />
    <rect x="947" y="893" width="13" height="5.5" fill="none" stroke="#ccc" strokeWidth="0.6" />
    <Labels
      items={[
        [997.5, 749, 12.5, "¶", { ...M, c: "#c157c6", b: true }],
        [997.5, 765.5, 5, "Invoice from Typographic", { ...M, w: 44 }], [997.5, 770.9, 3.6, "80034 E Jenny Street", { ...M, w: 28, c: "#999" }], [997.5, 775.6, 3.6, "Tuscan, KY PO Box 8300", { ...M, w: 33, c: "#999" }],
        [997.5, 792.7, 5.3, "$32.50 USD due on May 8, 2019", { ...M, w: 58 }], [997.5, 799.3, 3.8, "Choose how you'd like to pay.", { ...M, w: 38, c: "#999" }],
        [957, 816.3, 3.7, "Card", { c: "#8a72dd" }], [1000.5, 816.3, 3.7, "Bank transfer", { w: 18 }],
        [957, 827.6, 3.7, "Card number", { w: 22, c: "#aaa" }], [1037, 827.6, 3.7, "MM / YY  CVC", { ...E, w: 19, c: "#aaa" }],
        [997.5, 839, 4, "Pay Invoice", { ...M, w: 16, c: "#e6dbff" }],
        [954.5, 859.5, 4.1, "This includes the first month discount we discussed. Thanks", { w: 89 }], [954.5, 864.6, 4.1, "for your business!", { w: 27 }],
        [947, 875.5, 3.4, "DESCRIPTION", { w: 18 }], [1012, 875.5, 3.4, "QTY", { ...E, w: 5.5 }], [1030, 875.5, 3.4, "PRICE", { ...E, w: 8 }], [1048, 875.5, 3.4, "TOTAL", { ...E, w: 8 }],
        [947, 884.7, 3.6, "Growth Plan", { w: 17 }], [1012, 884.7, 3.6, "1", E], [1030, 884.7, 3.6, "$30.00", { ...E, w: 9.5 }], [1048, 884.7, 3.6, "$30.00", { ...E, w: 9.5 }],
        [949, 895.8, 3.4, "+ VIEW", { w: 9 }], [1030, 895, 3.6, "Tax (8.00%)", { ...E, w: 17 }], [1048, 895, 3.6, "$2.50", { ...E, w: 8 }], [1030, 900, 3.6, "Amount due", { ...E, w: 17 }],
      ]}
    />
  </Picture>
);

/* ---------- full invoice document ---------- */

function InvoiceDocument() {
  const items = [
    ["Platinum web hosting package", "Down 35mb, Up 100mb", "1", "$65.00", "$65.00", "mb-4", ""],
    ["2 page website design", "Includes basic wireframes, and responsive templates", "3", "$2,100.00", "$2,100.00", "mb-[18px]", ""],
    ["Mobile designs", "Includes responsive navigation", "1", "$250.00", "$250.00", "mb-0", "pr-[3px]"],
  ];
  const meta = [
    ["Invoice Number:", "14"],
    ["P.O./S.O. Number:", "AD29094"],
    ["Invoice Date:", "2018-09-25"],
    ["Payment Due:", "Upon receipt"],
  ];
  return (
    <article className="h-[725px] w-[562px] bg-white font-['Liberation_Sans',sans-serif] text-[9.7px] leading-[14px] text-[#414a55]">
      <header className="flex h-[171px] justify-between pr-[21px] pl-9">
        <div className="flex gap-2 self-start pt-[58px]">
          <svg className="shrink-0" width="48" height="48" viewBox="0 0 48 48">
            <rect width="48" height="48" rx="1.5" fill="#6b0099" />
            <path d="M7.5 8.5h34v9H28.5v24h-9v-20q0-4-1-4h-11zM19.500 18q0-9.500 5.500-9.500" fill="none" stroke="#e6cdf2" strokeWidth="1.3" />
          </svg>
          <div className="pt-[3px] font-['Roboto',sans-serif] text-[23px] leading-[22px] font-bold whitespace-nowrap text-[#4f433b]">
            <div className="tracking-[0.45px]">Turnpike</div>
            <div className="tracking-[0.75px]">
              Designs Co<span className="text-[#6b0099]">.</span>
            </div>
          </div>
        </div>
        <div className="pt-[26px] text-right">
          <h1 className="font-['Roboto',sans-serif] text-[27px] leading-7 font-light tracking-[0.15px] text-[#3a444f] [-webkit-text-stroke:0.35px_#3a444f]">INVOICE</h1>
          <p className="mt-6 font-bold tracking-[-0.28px]">Turnpike Designs</p>
          <p>156 University Ave, Toronto</p>
          <p>ON, Canada , M5H 2H7</p>
          <p className="mt-[14px]">416-555-1212</p>
        </div>
      </header>
      <section className="flex h-[150px] justify-between border-t border-[#d6d9db] pl-5">
        <div className="pt-[18px] leading-[13.9px]">
          <p className="text-[#8b9096]">BILL TO</p>
          <p className="font-bold tracking-[-0.15px]">Jiro Doi</p>
          <p>1954 Bloor Street West</p>
          <p>Toronto, ON, M6P 3K9</p>
          <p>Canada</p>
          <p className="mt-[14px]">j_doi@example.com</p>
          <p>416-555-1212</p>
        </div>
        <div className="w-[199px] pt-[19px]">
          {meta.map(([k, v]) => (
            <div key={k} className="flex gap-[11px]">
              <b className="w-[99px] text-right tracking-[-0.25px]">{k}</b>
              <span>{v}</span>
            </div>
          ))}
          <div className="mt-[10px] flex gap-[11px] bg-[#f1f1f2] leading-[27px] font-bold tracking-[-0.15px]">
            <span className="w-[99px] text-right">Amount Due (USD):</span>
            <span>$2,608.20</span>
          </div>
        </div>
      </section>
      <section className="mr-[21px] ml-5 h-[183px] border-t border-[#e3e4e5]">
        <div className="grid h-7 grid-cols-[1fr_60px_74.5px_84.5px] items-center border-b border-[#e3e4e5] pt-px font-bold tracking-[-0.12px]">
          <span>Services</span>
          <span className="text-center">Quantity</span>
          <span className="text-right">Price</span>
          <span className="text-right">Amount</span>
        </div>
        <div className="pt-3">
          {items.map(([name, note, qty, price, amount, gap, pad]) => (
            <div key={name} className={`grid grid-cols-[1fr_60px_74.5px_84.5px] ${gap}`}>
              <div>
                <p className="font-bold tracking-[-0.13px]">{name}</p>
                <p>{note}</p>
              </div>
              <span className="text-center">{qty}</span>
              <span className={`text-right ${pad}`}>{price}</span>
              <span className="text-right">{amount}</span>
            </div>
          ))}
        </div>
      </section>
      <section className="flex justify-end border-t-2 border-[#d0d4d6] pt-[18px] pr-5">
        <div className="w-[195px]">
          <div className="grid grid-cols-[112px_1fr] pr-px text-right">
            <b className="tracking-[-0.15px]">Subtotal:</b>
            <span>$2,145.00</span>
            <b className="tracking-[-0.15px]">Tax 8%:</b>
            <span>$193.20</span>
          </div>
          <div className="mt-[13px] grid h-[31px] grid-cols-[112px_1fr] items-center border-t border-[#e6e7e8] pr-px text-right">
            <b className="tracking-[-0.15px]">Total:</b>
            <span>$2,608.20</span>
          </div>
          <div className="grid h-[36px] grid-cols-[112px_1fr] items-center border-t-2 border-[#cfd3d5] pr-px text-right font-bold tracking-[-0.15px]">
            <span>Amount due (CAD):</span>
            <span>$2,608.20</span>
          </div>
        </div>
      </section>
    </article>
  );
}

const SelectedThumb = () => (
  <div className="relative h-[225px] w-[183px] overflow-hidden">
    <div className="-mt-[5px] h-[725px] w-[562px] origin-top-left scale-[0.3256]">
      <InvoiceDocument />
    </div>
    <div className="absolute inset-0 bg-[#202124]/45" />
  </div>
);

/* ---------- results panel ---------- */

function Card({ width, title, site, pad = "pt-[9px]", selected, children }) {
  return (
    <figure className={selected ? "-mx-[10px] -mt-[10px] h-[298px] shrink-0 rounded-lg border border-[#6c55f0] bg-[#e8eafe] p-[9px]" : "shrink-0"} style={{ width: selected ? width + 20 : width }}>
      {children}
      {title && (
        <figcaption className={`pl-[5px] whitespace-nowrap ${pad}`}>
          <div className="text-[15px] leading-[22px] tracking-[0.25px] text-[#3c4043]">{title}</div>
          <div className="text-[14px] leading-6 tracking-[0.08px] text-[#6d7277]">{site}</div>
        </figcaption>
      )}
    </figure>
  );
}

function Results() {
  return (
    <main className="flex h-[901px] w-[1162px] shrink-0 flex-col overflow-hidden bg-white pl-[25px]">
      <div className="flex h-[128px] shrink-0 items-start gap-[25px]">
        <Card width={181} title="Invoice Template | Crea…" site="freshbooks.com"><Freshbooks /></Card>
        <Card width={182} title="100 Free Invoice Templ…" site="invoicehome.com"><InvoiceHomeTop /></Card>
        <Card width={286} title="Stripe Partners: Invoice Home" site="stripe.com"><StripePartners /></Card>
        <Card width={181} title="Invoices - Office.com" site="templates.office.com"><OfficeTop /></Card>
        <Card width={183} title="Invoice template - Crea…" site="waveapps.com"><WaveTop /></Card>
      </div>
      <div className="flex h-[302px] shrink-0 items-start gap-[25px]">
        <Card width={331} pad="pt-2" title="Online Billing & Invoice Software ..." site="getharvest.com"><Harvest /></Card>
        <Card width={320} pad="pt-2" title="Simple service invoice" site="templates.office.com"><SimpleService /></Card>
        <Card width={194}><PurpleInvoice /></Card>
        <Card width={193}><OrangeInvoice /></Card>
      </div>
      <div className="flex h-[303px] shrink-0 items-start gap-[25px]">
        <Card width={183} selected title="Free invoice generator -…" site="waveapps.com"><SelectedThumb /></Card>
        <Card width={182} title="100 Free Invoice Templ…" site="invoicehome.com"><EastRepair /></Card>
        <Card width={418} title="Invoice Operations in Classic UI ..." site="chargebee.com"><Chargebee /></Card>
        <Card width={255} title="Introduction to Invoices" site="help.chargify.com"><Chargify /></Card>
      </div>
      <div className="flex h-[168px] shrink-0 items-start gap-[25px]">
        <Card width={336}><GreenInvoice /></Card>
        <Card width={245}><PayOnline /></Card>
        <Card width={183}><LogoInvoice /></Card>
        <Card width={274}><Typographic /></Card>
      </div>
    </main>
  );
}

/* ---------- preview panel ---------- */

function Preview() {
  const round = "flex size-[45px] items-center justify-center rounded-full bg-[#2a292f] text-[#7780f7]";
  return (
    <aside className="relative flex h-[901px] w-[716px] shrink-0 flex-col items-center overflow-hidden bg-[#141318] pt-[30px]">
      <InvoiceDocument />
      <button className="absolute top-10 left-10 flex size-[30px] items-center justify-center rounded-full bg-[#202024] text-white"><MdClose size={22} /></button>
      <button className="absolute top-10 left-[596px] flex size-[30px] items-center justify-center rounded-full bg-[#202124]/8 text-white"><MdChevronLeft size={26} /></button>
      <button className="absolute top-10 left-[646px] flex size-[30px] items-center justify-center rounded-full bg-[#16161a] text-[#3c3c41]"><MdChevronRight size={26} /></button>
      <div className="mt-[30px] w-[656px] border-t border-[#404045] pt-5">
        <div className="flex items-center gap-[10px]">
          <div className="mr-auto flex h-[45px] w-[173px] items-center gap-[6px] rounded-full bg-[#2a292f] pl-[7px] text-[#e8e8ea]">
            <MdPublic size={30} color="#7780f7" />
            <span className="text-[15px] font-medium tracking-[0.02px] whitespace-nowrap">Wave Accounting</span>
          </div>
          <button className={round}><MdShare size={25} /></button>
          <button className={round}><MdBookmarkBorder size={27} /></button>
          <button className={round}><MdMoreVert size={29} /></button>
        </div>
        <h2 className="mt-[17px] text-[24.5px] leading-[30px] tracking-[0.2px] whitespace-nowrap text-[#eeeef0]">Free invoice generator - Online invoice maker—Wave</h2>
      </div>
    </aside>
  );
}

function Scrollbar({ offset, thumb, upColor }) {
  return (
    <div className="flex h-[901px] w-[21px] flex-col items-center bg-[#f0f0f0]">
      <svg className="mt-[9px] shrink-0" width="9" height="5" viewBox="0 0 9 5"><path d="M0 5h9L4.5 0z" fill={upColor} /></svg>
      <div className={`w-[17px] shrink-0 bg-[#c1c1c1] ${offset} ${thumb}`} />
      <svg className="mt-auto mb-[7px] shrink-0" width="9" height="5" viewBox="0 0 9 5"><path d="M0 0h9L4.5 5z" fill="#505050" /></svg>
    </div>
  );
}

/* ---------- recorder window ---------- */

const Caret = ({ className = "" }) => (
  <svg className={className} width="8" height="4.5" viewBox="0 0 8 4.5"><path d="M0 0h8L4 4.5z" fill="#9b9b9b" /></svg>
);

const Pointer = () => <path d="M0 0L.8 21.500 6 17l6.200 8.300 3.600-2.200-4.500-7.600 6-2.600z" fill="#fff" />;

const FloppyIcon = () => (
  <svg width="28" height="31" viewBox="0 0 28 31" fill="none" stroke="#2d3a94" strokeWidth="1.700">
    <path d="M1 1h22.500L27 4.500V29.500H1z" />
    <path d="M5 29.500V15.500q0-1.500 1.500-1.500h15.500q1.500 0 1.500 1.500v14" />
    <path d="M7.500 1h12v9h-12z" fill="#2d3a94" />
    <path d="M16.500 2.500v5.500" stroke="#4d4d54" strokeWidth="2.600" />
  </svg>
);

const ClickImageIcon = () => (
  <svg width="42" height="40" viewBox="0 0 42 40">
    <path d="M2 1.500h33v28H2z" fill="none" stroke="#2788c9" strokeWidth="1.700" strokeDasharray="3.700 2.800" />
    <path d="M29 29.500h12M35 24v13" stroke="#2788c9" strokeWidth="1.700" />
    <g transform="translate(7.500 11.500)"><Pointer /></g>
  </svg>
);

const ClickTextIcon = () => (
  <svg width="38" height="42" viewBox="0 0 38 42">
    <rect x="1" y="1" width="36" height="22" fill="none" stroke="#d9932a" strokeWidth="1.800" strokeDasharray="4 2.600" />
    <text x="19.500" y="18.500" textAnchor="middle" fontSize="18" fontWeight="700" fontFamily="Liberation Sans, sans-serif" fill="#6b6b6b">AB</text>
    <g transform="translate(4.500 16) scale(.93)"><Pointer /></g>
  </svg>
);

const TypeIcon = () => (
  <svg width="36" height="41" viewBox="0 0 36 41">
    <path d="M.5 0h35v10.500h-1.300q-.8-8.200-8.700-8.200h-3.300v32q0 4.200 5 4.200v1.500H8.700v-1.500q5 0 5-4.200v-32h-3.200q-7.900 0-8.700 8.200H.5z" fill="#080808" />
  </svg>
);

const SelectCopyIcon = () => (
  <svg width="32" height="40" viewBox="0 0 32 40">
    <path d="M1.300 1.300h22.500l6.900 7.500v29.900H1.300z" fill="#fff" stroke="#6f6f6f" strokeWidth="2.600" />
    <path d="M24 1v7H31z" fill="#6f6f6f" />
    <text x="18.500" y="32.500" textAnchor="middle" fontSize="24" fontWeight="700" fontFamily="Liberation Sans, sans-serif" fill="#72b9e3" textLength="17" lengthAdjust="spacingAndGlyphs">A</text>
  </svg>
);

const ScreenIcon = () => (
  <svg width="40" height="31" viewBox="0 0 40 31">
    <rect x="1.300" y="1.300" width="37.400" height="23" fill="#242424" stroke="#6a6a6a" strokeWidth="2.600" />
    <path d="M17 25h6v3.500h4V31H13v-2.500h4z" fill="#6a6a6a" />
    <rect x="6" y="5.500" width="28" height="14.500" fill="none" stroke="#1a77bd" strokeWidth="1.500" strokeDasharray="1.600 .9" />
  </svg>
);

const ElementIcon = () => (
  <svg width="30" height="25" viewBox="0 0 30 25">
    <rect width="30" height="25" fill="#0f7fc2" />
    <rect x="2" y="6" width="26" height="17" fill="#fff" />
    <circle cx="18" cy="3" r="1" fill="#084a75" /><circle cx="22" cy="3" r="1" fill="#084a75" /><circle cx="26" cy="3" r="1.100" fill="#e03a3a" />
    <g fill="none" stroke="#6d6d6d" strokeWidth="1.500"><path d="M8.800 8h4.400v4.400H8.800zM17 8h4.400v4.400H17zM8.800 16h4.400v4.400H8.800zM17 16h4.400v4.400H17z" /></g>
  </svg>
);

const TextIcon = () => (
  <svg width="30" height="16" viewBox="0 0 30 16">
    <rect x=".7" y=".7" width="28.600" height="14.600" fill="#eee" stroke="#a5a5a5" strokeWidth="1.400" />
    <rect x="22" y="1.400" width="6.600" height="13.200" fill="#c9c9c9" />
    <text x="2.700" y="12" fontSize="11" fontWeight="700" fontFamily="Liberation Sans, sans-serif" fill="#222" textLength="16" lengthAdjust="spacingAndGlyphs">AB</text>
    <path d="M19.500 2.500q3 0 3 1.500v8q0 1.500-3 1.500M25.500 2.500q-3 0-3 1.500v8q0 1.500 3 1.500" fill="none" stroke="#111" strokeWidth="1.300" />
  </svg>
);

const ImageIcon = () => (
  <svg width="30" height="22" viewBox="0 0 30 22">
    <rect x="1" y="1" width="28" height="20" fill="#2f2f31" stroke="#6f6f6f" strokeWidth="2" />
    <circle cx="9" cy="8" r="2.800" fill="#f2d76b" />
    <path d="M4 18.500q1-3.500 4-3 2.500 1 4.500-3l4.500-5.500 4 6.500 2-3 3.500 8z" fill="#5b8fd0" />
  </svg>
);

function Tool({ icon, lines, box, caret, inlineCaret }) {
  return (
    <div className={`flex shrink-0 flex-col items-center text-center whitespace-nowrap ${box}`}>
      <div className="flex h-11 shrink-0 justify-center">{icon}</div>
      <div>{lines[0]}</div>
      {lines[1] && (
        <div className="flex items-center gap-1">
          {lines[1]}
          {inlineCaret && <Caret className="mt-px" />}
        </div>
      )}
      {caret && <Caret className="mt-[7px]" />}
    </div>
  );
}

function Recorder() {
  return (
    <div className="absolute top-[283px] left-[674px] h-[161px] w-[555px] border border-[#1c6aa8] bg-[#242424] font-['Open_Sans',sans-serif] text-[14.5px] leading-[18px] tracking-[-0.4px] text-[#ececec] shadow-[0_2px_14px_rgba(0,0,0,0.35)]">
      <div className="flex h-[41px] items-center justify-between bg-[#2d2d2f] pr-[22px] pl-[15px] text-[#9a9a9a]">
        <span className="-mt-0.5 tracking-[-0.35px]">Image Recording</span>
        <svg className="-mt-0.5" width="14" height="14" viewBox="0 0 14 14"><path d="M.7.7l12.600 12.600M13.300.7L.7 13.300" stroke="#f2f2f2" strokeWidth="1.400" /></svg>
      </div>
      <div className="flex items-start pt-2 pl-[15px]">
        <div className="mt-[3px] flex h-[82px] w-12 shrink-0 flex-col items-center bg-[#4d4d54] pt-[5px] text-center whitespace-nowrap">
          <div className="h-9"><FloppyIcon /></div>
          <div>Save</div>
          <div>&amp; Exit</div>
        </div>
        <div className="ml-[11px] h-[84px] w-px bg-[#333335]" />
        <Tool box="ml-[9px] h-[88px] w-[50px] bg-[#4d4d54] pt-1" icon={<ClickImageIcon />} lines={["Click", "Image"]} />
        <Tool box="ml-[2px] w-11 pt-1" icon={<ClickTextIcon />} lines={["Click", "Text"]} />
        <Tool box="ml-[2px] w-[47px] pt-1" icon={<TypeIcon />} lines={["Type"]} caret />
        <Tool box="ml-1 w-[50px] pt-1" icon={<SelectCopyIcon />} lines={["Select", "& Copy"]} />
        <Tool box="ml-[7px] w-[70px] pt-1" icon={<div className="pt-1"><ScreenIcon /></div>} lines={["Screen", "Scraping"]} inlineCaret />
        <Tool box="ml-[10px] w-[55px] pt-1" icon={<div className="pt-1"><ElementIcon /></div>} lines={["Element"]} caret />
        <Tool box="ml-3 w-[31px] pt-1" icon={<div className="pt-1"><TextIcon /></div>} lines={["Text"]} caret />
        <Tool box="ml-3 w-[42px] pt-1" icon={<div className="pt-1"><ImageIcon /></div>} lines={["Image"]} caret />
        <div className="ml-4 h-[84px] w-px bg-[#333335]" />
      </div>
    </div>
  );
}

export default function App() {
  return (
    <div className="relative h-[903px] w-[1920px] overflow-hidden bg-white font-['Roboto',sans-serif]">
      <div className="h-px bg-[#2b2529]" />
      <div className="flex h-[901px]">
        <Results />
        <Preview />
        <Scrollbar offset="mt-[7px]" thumb="h-[330px]" upColor="#a3a3a3" />
        <Scrollbar offset="mt-[46px]" thumb="h-[85px]" upColor="#505050" />
      </div>
      <div className="flex h-px bg-[#0a1824]">
        <div className="ml-[60px] w-[430px] bg-[#4d5f73]" />
      </div>
      <Recorder />
    </div>
  );
}
